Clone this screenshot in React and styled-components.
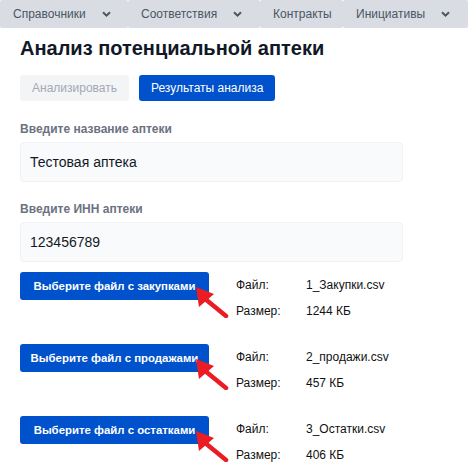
import React from "react";
import styled, { createGlobalStyle } from "styled-components";

const Global = createGlobalStyle`
  html, body { margin: 0; padding: 0; background: #fff; }
  body { font-family: "Liberation Sans", Arial, sans-serif; }
  * { box-sizing: border-box; }
`;

const NavBar = styled.nav`
  display: flex;
  height: 28px;
  background: #fff;
`;

const NavItem = styled.div`
  flex: 0 0 ${(p) => p.$w}px;
  display: flex;
  align-items: center;
  gap: 16px;
  padding-left: 13px;
  background: #d9dde3;
  border-radius: 2px;
  color: #4b5563;
  font-size: 12px;
`;

const Chevron = () => (
  <svg width="9" height="6" viewBox="0 0 9 6" aria-hidden="true">
    <path d="M1 1.2 L4.5 4.6 L8 1.2" fill="none" stroke="#4b5563" strokeWidth="2" />
  </svg>
);

const Main = styled.main`
  padding: 9px 20px 0 20px;
`;

const Title = styled.h1`
  margin: 0;
  font-size: 20px;
  line-height: 22px;
  font-weight: 700;
  color: #111827;
`;

const ButtonRow = styled.div`
  display: flex;
  gap: 10px;
  margin-top: 16px;
`;

const ActionButton = styled.button`
  height: 26px;
  padding: 0 12px;
  border: none;
  border-radius: 3px;
  font-family: inherit;
  font-size: 12px;
  background: ${(p) => (p.$disabled ? "#f3f4f6" : "#0052cc")};
  color: ${(p) => (p.$disabled ? "#a3a9b4" : "#ffffff")};
`;

const Field = styled.div`
  display: flex;
  flex-direction: column;
  gap: 5px;
  margin-top: ${(p) => p.$mt}px;
`;

const Label = styled.label`
  font-size: 12px;
  line-height: 16px;
  font-weight: 700;
  color: #6b7280;
`;

const Input = styled.div`
  width: 383px;
  height: 40px;
  display: flex;
  align-items: center;
  padding-left: 9px;
  background: #f9fafb;
  border: 1px solid #f1f2f4;
  border-radius: 4px;
  font-size: 14px;
  color: #111827;
`;

const FileList = styled.div`
  display: flex;
  flex-direction: column;
  gap: 24px;
  margin-top: 10px;
`;

const FileRow = styled.div`
  display: flex;
  align-items: flex-start;
  gap: 27px;
`;

const ButtonWrap = styled.div`
  position: relative;
`;

const FileButton = styled.button`
  width: 189px;
  height: 28px;
  border: none;
  border-radius: 3px;
  background: #0052cc;
  color: #fff;
  font-family: inherit;
  font-size: 11.4px;
  font-weight: 700;
  padding: 0;
`;

const Pointer = styled.svg`
  position: absolute;
  left: 174px;
  top: 14px;
`;

const Arrow = () => (
  <Pointer width="36" height="32" viewBox="0 0 36 32" aria-hidden="true">
    <polygon points="2,1 5,21 20,8" fill="#ec1c24" />
    <line x1="10" y1="12" x2="32" y2="30" stroke="#ec1c24" strokeWidth="4.5" strokeLinecap="round" />
  </Pointer>
);

const Info = styled.div`
  display: grid;
  grid-template-columns: 70px auto;
  row-gap: 8px;
  padding-top: 4px;
  font-size: 12px;
  line-height: 18px;
  color: #111;
`;

const nav = [
  { t: "Справочники", w: 128, c: true },
  { t: "Соответствия", w: 132, c: true },
  { t: "Контракты", w: 83, c: false },
  { t: "Инициативы", w: 125, c: true },
];

const files = [
  { b: "Выберите файл с закупками", f: "1_Закупки.csv", s: "1244 КБ" },
  { b: "Выберите файл с продажами", f: "2_продажи.csv", s: "457 КБ" },
  { b: "Выберите файл с остатками", f: "3_Остатки.csv", s: "406 КБ" },
];

export default function App() {
  return (
    <>
      <Global />
      <NavBar>
        {nav.map((n) => (
          <NavItem key={n.t} $w={n.w}>
            <span>{n.t}</span>
            {n.c && <Chevron />}
          </NavItem>
        ))}
      </NavBar>
      <Main>
        <Title>Анализ потенциальной аптеки</Title>
        <ButtonRow>
          <ActionButton $disabled>Анализировать</ActionButton>
          <ActionButton>Результаты анализа</ActionButton>
        </ButtonRow>
        <Field $mt={20}>
          <Label>Введите название аптеки</Label>
          <Input>Тестовая аптека</Input>
        </Field>
        <Field $mt={19}>
          <Label>Введите ИНН аптеки</Label>
          <Input>123456789</Input>
        </Field>
        <FileList>
          {files.map((f) => (
            <FileRow key={f.f}>
              <ButtonWrap>
                <FileButton>{f.b}</FileButton>
                <Arrow />
              </ButtonWrap>
              <Info>
                <span>Файл:</span>
                <span>{f.f}</span>
                <span>Размер:</span>
                <span>{f.s}</span>
              </Info>
            </FileRow>
          ))}
        </FileList>
      </Main>
    </>
  );
}
